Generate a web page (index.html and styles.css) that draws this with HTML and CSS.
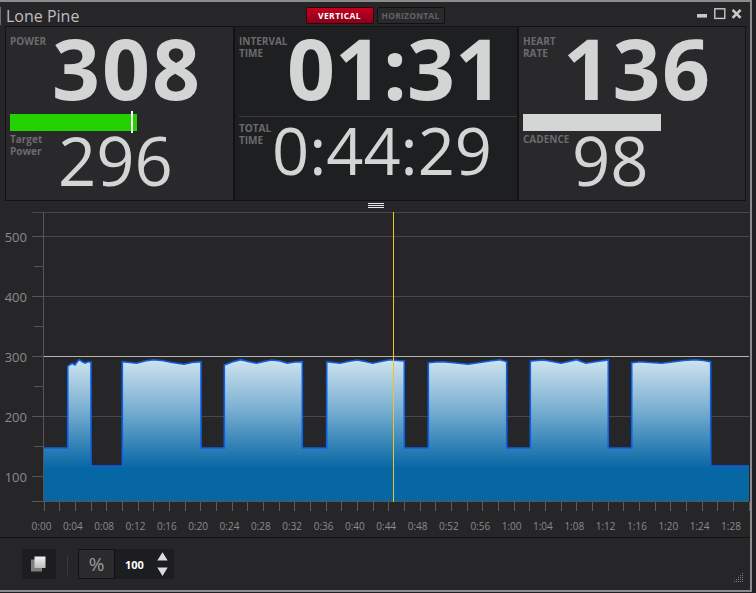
FILE: index.html
```html
<!DOCTYPE html>
<html>
<head>
<meta charset="utf-8">
<link rel="stylesheet" href="styles.css">
</head>
<body>
<div class="window">
  <header class="titlebar">
    <div class="title">Lone Pine</div>
    <div class="toggle">
      <button class="tg on">VERTICAL</button>
      <button class="tg">HORIZONTAL</button>
    </div>
    <svg class="winctl" width="46" height="12" viewBox="0 0 46 12">
      <rect x="0" y="6" width="10" height="3.6" fill="#c8c8c8"/>
      <rect x="17.8" y="0.8" width="10" height="9.6" fill="none" stroke="#c8c8c8" stroke-width="1.4"/>
      <path d="M35.6 1.8 L43.6 9.8 M43.6 1.8 L35.6 9.8" stroke="#c8c8c8" stroke-width="2.6"/>
    </svg>
  </header>

  <section class="panels">
    <div class="panel p-left">
      <div class="row top"><div class="lbl">POWER</div><div class="big">308</div></div>
      <div class="bar green"><span class="marker"></span></div>
      <div class="row bottom"><div class="lbl">Target<br>Power</div><div class="mnum">296</div></div>
    </div>
    <div class="panel p-mid">
      <div class="row top"><div class="lbl">INTERVAL<br>TIME</div><div class="big">01:31</div></div>
      <div class="divider"></div>
      <div class="row bottom"><div class="lbl">TOTAL<br>TIME</div><div class="mnum">0:44:29</div></div>
    </div>
    <div class="panel p-right">
      <div class="row top"><div class="lbl">HEART<br>RATE</div><div class="big">136</div></div>
      <div class="bar white"></div>
      <div class="row bottom"><div class="lbl">CADENCE</div><div class="mnum">98</div></div>
    </div>
  </section>

  <div class="handle"><span class="grab"></span></div>

  <div class="chart">
    <svg class="plot" width="750" height="325" viewBox="0 212 750 325">
      <defs>
        <linearGradient id="fillg" gradientUnits="userSpaceOnUse" x1="0" y1="358" x2="0" y2="468">
          <stop offset="0" stop-color="#d2e5ef"/>
          <stop offset="0.45" stop-color="#7db1d3"/>
          <stop offset="1" stop-color="#0767a5"/>
        </linearGradient>
      </defs>
      <path d="M32 212.5 H750" stroke="#474749" stroke-width="1"/>
      <path d="M44 236.5 H749 M44 296.5 H749 M44 416.5 H749 M44 476.5 H749" stroke="#48484a" stroke-width="1"/>
      <path d="M32 236.5 H43 M32 296.5 H43 M32 356.5 H43 M32 416.5 H43 M32 476.5 H43 M34 266.5 H43 M34 326.5 H43 M34 386.5 H43 M34 446.5 H43" stroke="#555" stroke-width="1"/>
      <path d="M44 501 L44 448 L67.7 448 L67.7 366.5 L70 364.5 L72.5 363.5 L75 365 L77 362 L79.3 359.7 L82 361.5 L85 363 L88.3 361.7 L91 362 L91 466 L122.3 466 L122.3 361.7 L130 362.5 L136.7 363.3 L145 361 L153 359.7 L162 360.5 L172 362.5 L184 364.3 L192 362.5 L201 361.7 L201 448 L224.3 448 L224.3 365 L232 362 L240.7 359.7 L248 361.5 L256.7 363.3 L264 361.5 L271.7 360 L280 361 L287.3 363.3 L295 362 L302.3 361.7 L302.3 448 L326.7 448 L326.7 361.7 L333 362.5 L340 363.3 L348 361.5 L357.3 360 L365 361.5 L372.7 363.3 L381 361.5 L390 359.7 L397 360.5 L404.3 361 L404.3 448 L428.3 448 L428.3 362.7 L436 362 L443.3 361.7 L456 363 L468.3 364.3 L480 362.5 L490 361 L500 359.7 L506.7 361.7 L506.7 448 L530.3 448 L530.3 361.3 L537 360.5 L543.3 360 L552 361.5 L561 363.3 L569 361.5 L576.7 359.7 L581 361.5 L586 363.3 L597 361.5 L608.3 360 L608.3 448 L631.7 448 L631.7 362.7 L640 361.7 L650 362.5 L661.7 363.3 L672 362 L684 360.5 L695 359.7 L703 360.5 L710.7 361.7 L710.7 466 L749 466 L749 501 Z" fill="url(#fillg)"/>
      <path d="M44 448 L67.7 448 L67.7 366.5 L70 364.5 L72.5 363.5 L75 365 L77 362 L79.3 359.7 L82 361.5 L85 363 L88.3 361.7 L91 362 L91 466 L122.3 466 L122.3 361.7 L130 362.5 L136.7 363.3 L145 361 L153 359.7 L162 360.5 L172 362.5 L184 364.3 L192 362.5 L201 361.7 L201 448 L224.3 448 L224.3 365 L232 362 L240.7 359.7 L248 361.5 L256.7 363.3 L264 361.5 L271.7 360 L280 361 L287.3 363.3 L295 362 L302.3 361.7 L302.3 448 L326.7 448 L326.7 361.7 L333 362.5 L340 363.3 L348 361.5 L357.3 360 L365 361.5 L372.7 363.3 L381 361.5 L390 359.7 L397 360.5 L404.3 361 L404.3 448 L428.3 448 L428.3 362.7 L436 362 L443.3 361.7 L456 363 L468.3 364.3 L480 362.5 L490 361 L500 359.7 L506.7 361.7 L506.7 448 L530.3 448 L530.3 361.3 L537 360.5 L543.3 360 L552 361.5 L561 363.3 L569 361.5 L576.7 359.7 L581 361.5 L586 363.3 L597 361.5 L608.3 360 L608.3 448 L631.7 448 L631.7 362.7 L640 361.7 L650 362.5 L661.7 363.3 L672 362 L684 360.5 L695 359.7 L703 360.5 L710.7 361.7 L710.7 466 L749 466" fill="none" stroke="#0d5fe6" stroke-width="1.6"/>
      <path d="M44 356.5 H749" stroke="#b4b4b4" stroke-width="1"/>
      <path d="M43.5 212 V502 M32 501.5 H749" stroke="#555" stroke-width="1"/>
      <path d="M44.5 502v9 M59.5 502v9 M75.5 502v9 M91.5 502v9 M106.5 502v9 M122.5 502v9 M138.5 502v9 M153.5 502v9 M169.5 502v9 M185.5 502v9 M200.5 502v9 M216.5 502v9 M232.5 502v9 M247.5 502v9 M263.5 502v9 M279.5 502v9 M294.5 502v9 M310.5 502v9 M326.5 502v9 M341.5 502v9 M357.5 502v9 M373.5 502v9 M388.5 502v9 M404.5 502v9 M420.5 502v9 M435.5 502v9 M451.5 502v9 M467.5 502v9 M482.5 502v9 M498.5 502v9 M514.5 502v9 M529.5 502v9 M545.5 502v9 M561.5 502v9 M576.5 502v9 M592.5 502v9 M608.5 502v9 M623.5 502v9 M639.5 502v9 M655.5 502v9 M670.5 502v9 M686.5 502v9 M702.5 502v9 M717.5 502v9 M733.5 502v9 M749.5 502v9" stroke="#5a5a5a" stroke-width="1"/>
      <path d="M393.5 212 V502" stroke="#f2c31c" stroke-width="1"/>
      <g class="ylab" text-anchor="end">
        <text x="27" y="242">500</text>
        <text x="27" y="302">400</text>
        <text x="27" y="362">300</text>
        <text x="27" y="422">200</text>
        <text x="27" y="482">100</text>
      </g>
      <g class="xlab" text-anchor="middle">
        <text x="41.5" y="530">0:00</text>
        <text x="72.8" y="530">0:04</text>
        <text x="104.2" y="530">0:08</text>
        <text x="135.5" y="530">0:12</text>
        <text x="166.9" y="530">0:16</text>
        <text x="198.2" y="530">0:20</text>
        <text x="229.5" y="530">0:24</text>
        <text x="260.9" y="530">0:28</text>
        <text x="292.2" y="530">0:32</text>
        <text x="323.6" y="530">0:36</text>
        <text x="354.9" y="530">0:40</text>
        <text x="386.2" y="530">0:44</text>
        <text x="417.6" y="530">0:48</text>
        <text x="448.9" y="530">0:52</text>
        <text x="480.3" y="530">0:56</text>
        <text x="511.6" y="530">1:00</text>
        <text x="542.9" y="530">1:04</text>
        <text x="574.3" y="530">1:08</text>
        <text x="605.6" y="530">1:12</text>
        <text x="637" y="530">1:16</text>
        <text x="668.3" y="530">1:20</text>
        <text x="699.6" y="530">1:24</text>
        <text x="731" y="530">1:28</text>
      </g>
    </svg>
  </div>

  <footer class="toolbar">
    <div class="tbtn">
      <svg width="34" height="30" viewBox="0 0 34 30">
        <defs>
          <linearGradient id="sq" x1="0" y1="0" x2="0" y2="1">
            <stop offset="0" stop-color="#f2f2f2"/>
            <stop offset="1" stop-color="#bdbdbd"/>
          </linearGradient>
        </defs>
        <rect x="9" y="10.5" width="11" height="12" fill="#7e7e80"/>
        <rect x="12.5" y="7.5" width="11" height="11.5" fill="url(#sq)"/>
      </svg>
    </div>
    <div class="vsep"></div>
    <div class="pct">%</div>
    <div class="numbox">
      <span class="numval">100</span>
      <svg class="spin" width="11" height="25" viewBox="0 0 11 25">
        <polygon points="0.3,8.5 5.5,0.3 10.7,8.5" fill="#dcdcdc"/>
        <polygon points="0.3,15.5 10.7,15.5 5.5,24" fill="#dcdcdc"/>
      </svg>
    </div>
  </footer>

  <svg class="grip" width="12" height="12" viewBox="0 0 12 12">
    <g fill="#7a7a7a">
      <rect x="10" y="0" width="1" height="1"/>
      <rect x="8" y="2" width="1" height="1"/><rect x="10" y="2" width="1" height="1"/>
      <rect x="6" y="4" width="1" height="1"/><rect x="8" y="4" width="1" height="1"/><rect x="10" y="4" width="1" height="1"/>
      <rect x="4" y="6" width="1" height="1"/><rect x="6" y="6" width="1" height="1"/><rect x="8" y="6" width="1" height="1"/><rect x="10" y="6" width="1" height="1"/>
      <rect x="2" y="8" width="1" height="1"/><rect x="4" y="8" width="1" height="1"/><rect x="6" y="8" width="1" height="1"/><rect x="8" y="8" width="1" height="1"/><rect x="10" y="8" width="1" height="1"/>
    </g>
  </svg>
</div>
</body>
</html>
```

FILE: styles.css
```css
* { box-sizing: border-box; }

body {
  margin: 0;
  width: 756px;
  height: 593px;
  overflow: hidden;
  background: #1f1f21;
  font-family: "Open Sans", "DejaVu Sans", sans-serif;
}

.window {
  position: relative;
  width: 752px;
  height: 592px;
  border-top: 2px solid #8c8c8c;
  border-right: 2px solid #8c8c8c;
  border-bottom: 2px solid #8c8c8c;
  background: #262628;
  display: flex;
  flex-direction: column;
}

/* title bar */
.titlebar {
  height: 24px;
  flex: none;
  display: grid;
  grid-template-columns: 1fr auto 1fr;
  align-items: start;
}

.title {
  justify-self: start;
  margin-top: 4.5px;
  height: 18px;
  padding-left: 5px;
  border-left: 1px solid #6e6e6e;
  font: 400 16px/18px "Open Sans", sans-serif;
  color: #bebebe;
}

.toggle {
  display: flex;
  gap: 3px;
  margin-top: 5px;
}

.tg {
  width: 68px;
  height: 17px;
  padding: 0;
  border: 1px solid #111;
  border-radius: 2px;
  background: #29292b;
  color: #626264;
  font: 700 8.5px/15px "Open Sans", sans-serif;
  letter-spacing: 0.2px;
  white-space: nowrap;
}

.tg.on {
  border-color: #3a0008;
  background: linear-gradient(#c4001f, #88001a);
  color: #ffffff;
  letter-spacing: 0.4px;
}

.winctl {
  justify-self: end;
  margin-top: 6px;
  margin-right: 7px;
}

/* metric panels */
.panels {
  flex: none;
  height: 175px;
  margin-left: 5px;
  display: grid;
  grid-template-columns: 229px 284px 228px;
}

.panel {
  border: 1px solid #121213;
  background: #29292b;
}

.panel.p-mid {
  background: #1e1f21;
}

.row {
  display: grid;
  align-items: start;
}

.lbl {
  padding-left: 4px;
  font: 700 10px/12px "Open Sans", sans-serif;
  color: #6b6b6d;
  white-space: nowrap;
}

.row.top .lbl { margin-top: 8px; }
.row.bottom .lbl { margin-top: 2px; }

.big {
  margin-top: -1px;
  font: 700 84px/84px "Open Sans", sans-serif;
  color: #d3d5d5;
  white-space: nowrap;
}

.mnum {
  margin-top: -4px;
  font: 400 67px/67px "Open Sans", sans-serif;
  color: #d3d5d5;
  white-space: nowrap;
}

.p-left .row.top { grid-template-columns: 46px auto; }
.p-left .big { letter-spacing: 2px; }
.p-left .row.bottom { grid-template-columns: 52px auto; }
.p-mid .row.top { grid-template-columns: 52px auto; }
.p-mid .row.bottom { grid-template-columns: 37px auto; }
.p-mid .row.bottom .lbl { margin-top: 5px; }
.p-mid .row.bottom .mnum { margin-top: 0.5px; font-size: 65px; line-height: 65px; }
.p-right .row.top { grid-template-columns: 44px auto; }
.p-right .big { letter-spacing: 1.5px; }
.p-right .row.bottom { grid-template-columns: 53px auto; }

.bar {
  position: relative;
  height: 17px;
  margin: 4px 0 0 4px;
}

.bar.green { width: 127px; background: #23d200; }
.bar.white { width: 138px; background: #d4d5d5; }

.marker {
  position: absolute;
  left: 121px;
  top: -3px;
  width: 2px;
  height: 22px;
  background: #ffffff;
}

.divider {
  height: 1px;
  margin: 6px 0 0 4px;
  background: #3c3c3e;
}

/* drag handle */
.handle {
  flex: none;
  height: 11px;
  display: flex;
  justify-content: center;
}

.grab {
  width: 16px;
  height: 5px;
  margin-top: 2px;
  margin-left: 1px;
  background: repeating-linear-gradient(#e8e8e8 0 1px, transparent 1px 2px);
}

/* chart */
.chart {
  flex: none;
  border-bottom: 1px solid #101011;
}

.plot { display: block; }

.ylab text {
  font: 400 13px "Open Sans", sans-serif;
  fill: #8a8a8c;
}

.xlab text {
  font: 400 10px "Open Sans", sans-serif;
  fill: #8a8a8c;
}

/* toolbar */
.toolbar {
  flex: 1;
  display: flex;
  align-items: flex-start;
  padding: 11px 0 0 22px;
}

.tbtn {
  width: 34px;
  height: 30px;
  border-radius: 2px;
  background: #1c1d1f;
}

.tbtn svg { display: block; }

.vsep {
  width: 1px;
  height: 19px;
  margin: 7px 0 0 11px;
  background: #3a3a3c;
}

.pct {
  width: 37px;
  height: 30px;
  margin-left: 10px;
  border: 1px solid #111;
  background: #2b2b2d;
  color: #9a9a9c;
  font: 400 19px/28px "Open Sans", sans-serif;
  text-align: center;
}

.numbox {
  width: 59px;
  height: 30px;
  display: flex;
  align-items: center;
  padding-left: 10px;
  background: #1c1d1f;
  border-radius: 0 2px 2px 0;
}

.numval {
  font: 700 11px/1 "Open Sans", sans-serif;
  color: #ffffff;
}

.spin {
  display: block;
  margin-left: 13px;
}

.grip {
  position: absolute;
  right: 6px;
  bottom: 5px;
}
```
